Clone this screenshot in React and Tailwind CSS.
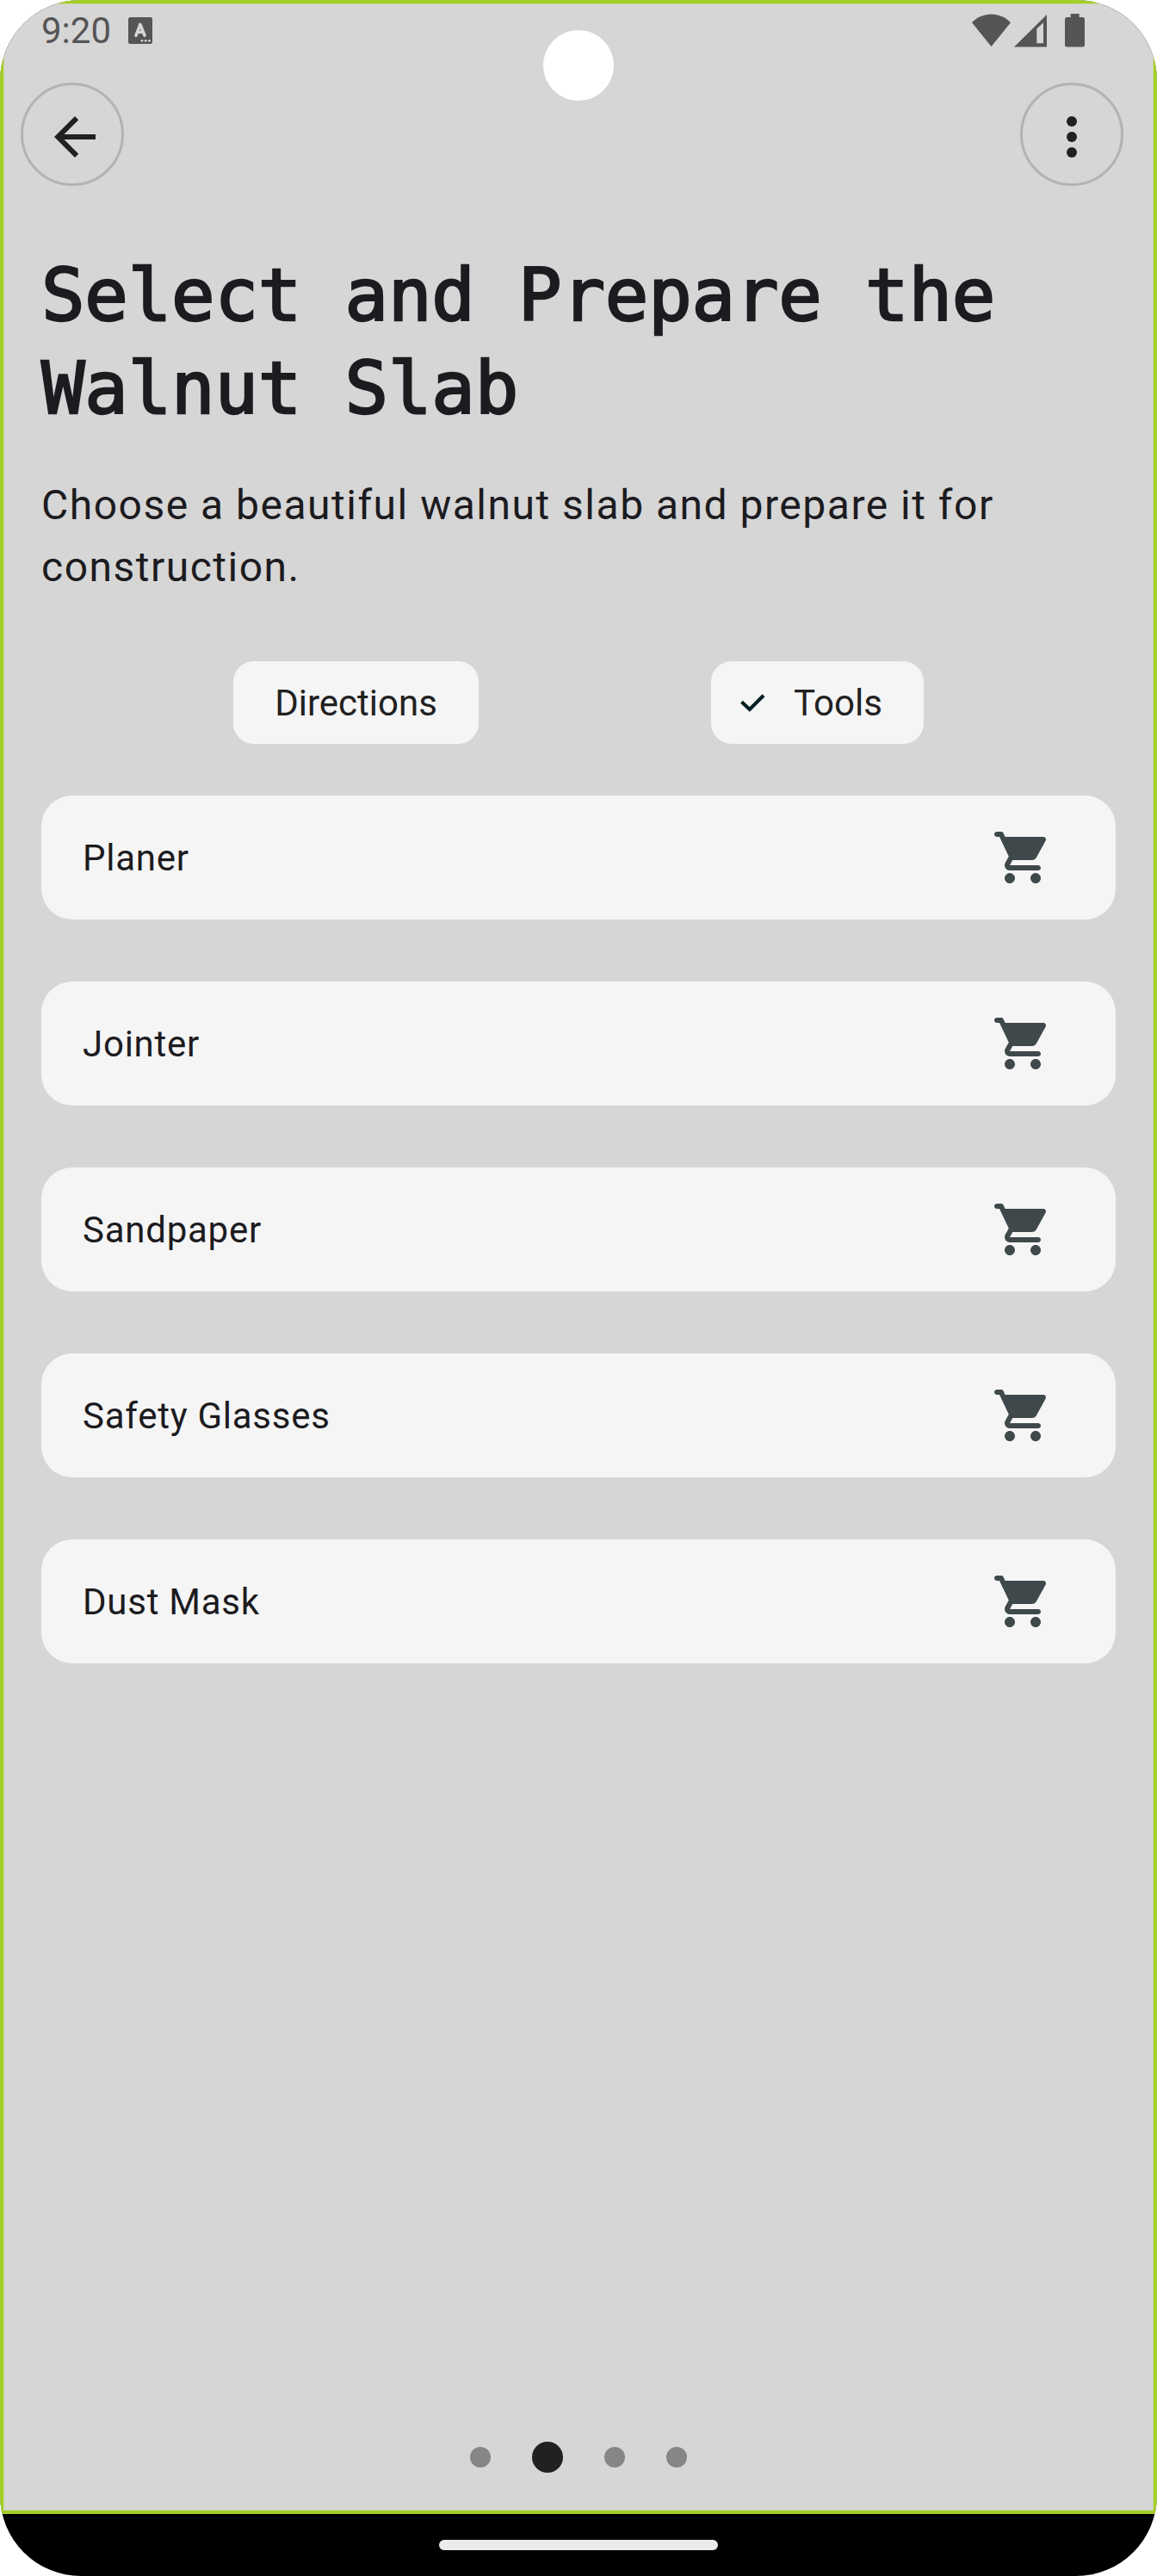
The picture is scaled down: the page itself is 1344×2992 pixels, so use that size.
const tools = ['Planer', 'Jointer', 'Sandpaper', 'Safety Glasses', 'Dust Mask'];

function CartIcon() {
  return (
    <svg viewBox="0 0 24 24" className="size-18 fill-[#3f484a]">
      <path d="M7 18c-1.1 0-1.99.9-1.99 2S5.9 22 7 22s2-.9 2-2-.9-2-2-2zM1 3c0 .55.45 1 1 1h1l3.6 7.59-1.35 2.44C4.52 15.37 5.48 17 7 17h11c.55 0 1-.45 1-1s-.45-1-1-1H7l1.1-2h7.45c.75 0 1.41-.41 1.75-1.03l3.58-6.49c.37-.66-.11-1.48-.87-1.48H5.21l-.67-1.43c-.16-.35-.52-.57-.9-.57H2c-.55 0-1 .45-1 1zm16 15c-1.1 0-1.99.9-1.99 2s.89 2 1.99 2 2-.9 2-2-.9-2-2-2z" />
    </svg>
  );
}

function RoundButton({ label, children }) {
  return (
    <button aria-label={label} className="flex size-30 items-center justify-center rounded-full border-3 border-[#b3b3b3] pt-[6px]">
      {children}
    </button>
  );
}

function StatusBar() {
  return (
    <div className="flex h-[68px] items-start justify-between pr-[80px] pl-[44px]">
      <div className="flex items-center pt-[7px]">
        <span className="w-[101px] text-[42px] leading-[49px] text-[#555]">9:20</span>
        <svg viewBox="0 0 28 31" className="h-[31px] w-7">
          <rect width="28" height="31" rx="2.5" fill="#555" />
          <path d="M9 21.200 13.900 8.400 19 21.200M10.600 17.200H17.200" fill="none" stroke="#d6d6d6" strokeWidth="3.6" strokeLinecap="round" strokeLinejoin="round" />
          <g fill="#d6d6d6">
            <circle cx="16" cy="27.3" r="1.4" />
            <circle cx="20.2" cy="27.3" r="1.4" />
            <circle cx="24.5" cy="27.3" r="1.4" />
          </g>
        </svg>
      </div>
      <div className="flex pt-[12px]">
        <svg viewBox="0 0 45 38" className="h-[38px] w-[45px] fill-[#555]">
          <path d="M22.5 38 0 10.300C6 4 14 .6 22.500.6S39 4 45 10.300z" />
        </svg>
        <svg viewBox="0 0 38 38" className="mt-px ml-[4px] h-[38px] w-[38px] fill-[#555]">
          <path fillRule="evenodd" d="M38 0V37.500H0zM34 9.300 26.300 16.500V33.300H34z" />
        </svg>
        <svg viewBox="0 0 23 39" className="ml-[21px] h-[39px] w-[23px] fill-[#555]">
          <path d="M6.700 0h10v4H20.500a2.500 2.500 0 0 1 2.500 2.500V36a2.500 2.500 0 0 1-2.500 2.500h-18A2.500 2.500 0 0 1 0 36V6.500A2.500 2.500 0 0 1 2.500 4H6.700z" />
        </svg>
      </div>
    </div>
  );
}

export default function App() {
  return (
    <div className="h-[2992px] w-[1344px] bg-white font-[Roboto,sans-serif] text-[#1c1b1f]">
      <div className="relative flex h-full flex-col overflow-hidden rounded-[94px] bg-black">
        <div className="absolute top-[35px] left-[631px] size-[82px] rounded-full bg-white" />
        <div className="flex h-[2920px] flex-col border-4 border-[#a4cf26] bg-[#d6d6d6] shadow-[inset_0_0_0_1px_#c9d6a8]">
          <StatusBar />
          <header className="mt-6 flex justify-between pr-[35px] pl-5">
            <RoundButton label="Back">
              <svg viewBox="0 0 24 24" className="ml-[6px] size-18 shrink-0 fill-[#212121]">
                <path d="M20 11H7.830l5.590-5.590L12 4l-8 8 8 8 1.410-1.410L7.830 13H20v-2z" />
              </svg>
            </RoundButton>
            <RoundButton label="More options">
              <svg viewBox="0 0 24 24" className="size-18 shrink-0 fill-[#212121]">
                <circle cx="12" cy="6" r="2" />
                <circle cx="12" cy="12" r="2" />
                <circle cx="12" cy="18" r="2" />
              </svg>
            </RoundButton>
          </header>
          <main className="flex flex-1 flex-col px-11">
            <h1 className="mt-[73px] font-['DejaVu_Sans_Mono',monospace] text-[84px] leading-[108px] tracking-[-0.2px] whitespace-nowrap [-webkit-text-stroke:2.4px_#1c1b1f]">
              Select and Prepare the
              <br />
              Walnut Slab
            </h1>
            <p className="mt-[46px] text-[48px] leading-[72px] tracking-[1.5px]">
              Choose a beautiful walnut slab and prepare it for
              <br />
              construction.
            </p>
            <div className="mt-[73px] flex pl-[223px] text-[42px] text-[#212121]">
              <button className="flex h-24 w-[285px] items-center justify-center rounded-3xl bg-[#f5f5f5]">Directions</button>
              <button className="ml-[270px] flex h-24 w-[247px] items-center rounded-3xl bg-[#f5f5f5] pl-[34px]">
                <svg viewBox="0 0 29 21" className="h-[21px] w-[29px]">
                  <path d="M1.500 9.200 10.800 18 27 1.700" fill="none" stroke="#001f24" strokeWidth="4.1" />
                </svg>
                <span className="ml-[33px]">Tools</span>
              </button>
            </div>
            <ul className="mt-[60px] flex flex-col gap-18">
              {tools.map((tool) => (
                <li key={tool} className="flex h-36 items-center justify-between rounded-[36px] bg-[#f5f5f5] pr-18 pl-12 text-[42px] tracking-[0.75px]">
                  {tool}
                  <CartIcon />
                </li>
              ))}
            </ul>
          </main>
          <div className="mb-[44px] flex h-9 items-center justify-center gap-12">
            <span className="size-6 rounded-full bg-[#868686]" />
            <span className="size-9 rounded-full bg-[#212121]" />
            <span className="size-6 rounded-full bg-[#868686]" />
            <span className="size-6 rounded-full bg-[#868686]" />
          </div>
        </div>
        <div className="flex h-18 justify-center pt-[30px]">
          <div className="h-3 w-[324px] rounded-full bg-[#ebebeb]" />
        </div>
      </div>
    </div>
  );
}
